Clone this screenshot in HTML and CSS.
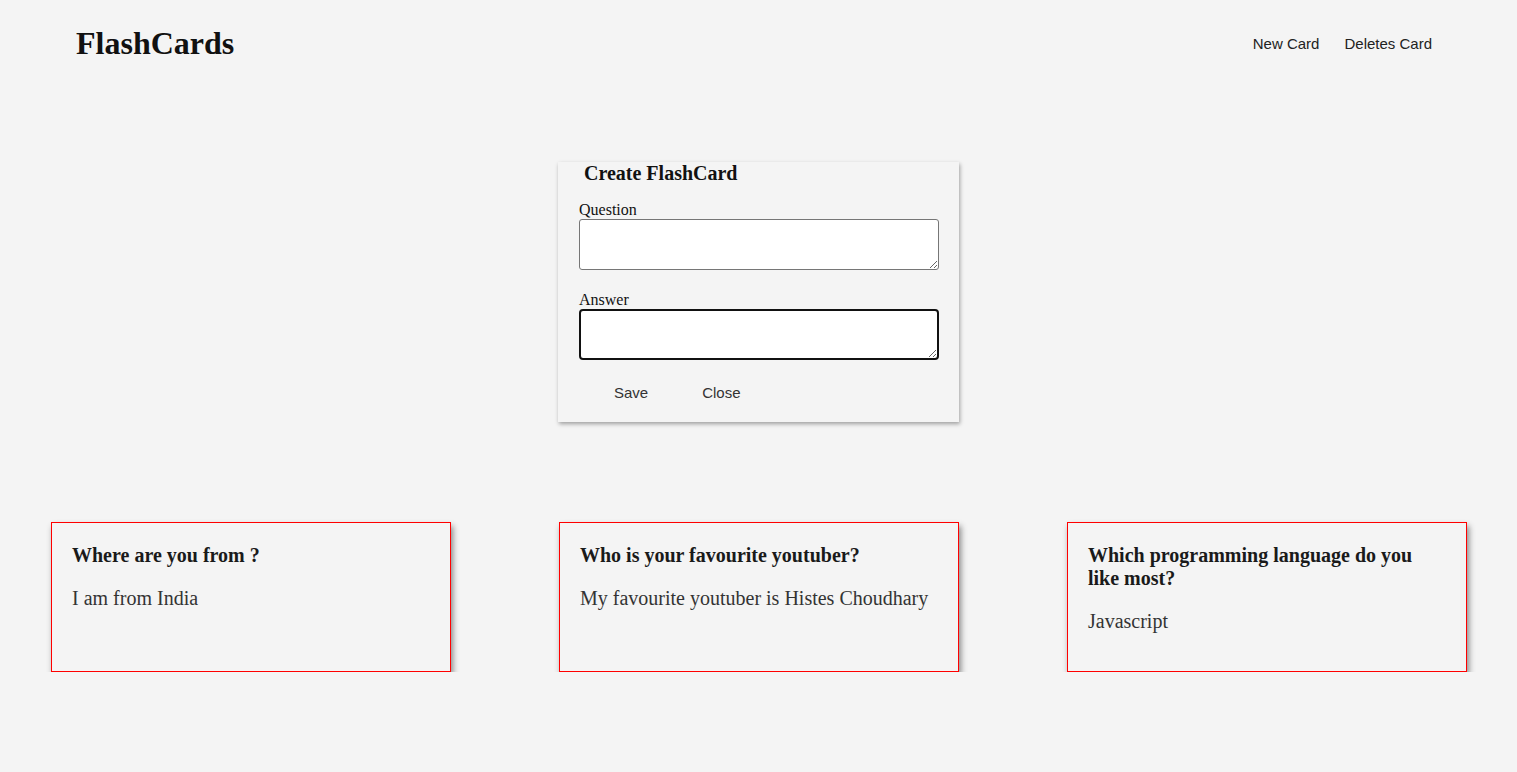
FILE: index.html
```html
<!DOCTYPE html>
<html lang="en">
<head>
<meta charset="utf-8">
<title>FlashCards</title>
<link rel="stylesheet" href="styles.css">
</head>
<body>
<header class="topbar">
  <h1 class="brand">FlashCards</h1>
  <nav class="nav">
    <button class="nav-btn">New Card</button>
    <button class="nav-btn">Deletes Card</button>
  </nav>
</header>

<main>
  <section class="create">
    <h3 class="create-title">Create FlashCard</h3>
    <label class="field-label" for="q">Question</label>
    <textarea id="q" class="field"></textarea>
    <label class="field-label answer-label" for="a">Answer</label>
    <textarea id="a" class="field field-focus"></textarea>
    <div class="actions">
      <button class="act-btn">Save</button>
      <button class="act-btn">Close</button>
    </div>
  </section>

  <section class="cards">
    <article class="card">
      <h3 class="card-q">Where are you from ?</h3>
      <p class="card-a">I am from India</p>
    </article>
    <article class="card">
      <h3 class="card-q">Who is your favourite youtuber?</h3>
      <p class="card-a">My favourite youtuber is Histes Choudhary</p>
    </article>
    <article class="card">
      <h3 class="card-q">Which programming language do you like most?</h3>
      <p class="card-a">Javascript</p>
    </article>
  </section>
</main>
</body>
</html>
```

FILE: styles.css
```css
* { box-sizing: border-box; }

body {
  margin: 0;
  background: #f4f4f4;
  font-family: "Times New Roman", "Liberation Serif", serif;
  color: #111;
}

.topbar {
  height: 87px;
  display: flex;
  align-items: center;
  justify-content: space-between;
  padding: 0 85px 0 76px;
}

.brand {
  margin: 0;
  font-size: 32px;
  font-weight: bold;
  color: #111;
}

.nav {
  display: flex;
  gap: 25px;
}

.nav-btn {
  background: none;
  border: none;
  padding: 0;
  font-family: Arial, "Liberation Sans", sans-serif;
  font-size: 15px;
  color: #222;
  cursor: pointer;
}

.create {
  width: 401px;
  margin: 75px auto 0;
  padding: 0 20px 0 21px;
  height: 260px;
  background: #f4f4f4;
  box-shadow: 1px 2px 4px rgba(0, 0, 0, 0.35);
  display: flex;
  flex-direction: column;
}

.create-title {
  margin: 0;
  padding-left: 5px;
  font-size: 20px;
  line-height: 23px;
  color: #111;
}

.field-label {
  display: block;
  margin-top: 15px;
  font-size: 16px;
  line-height: 19px;
  color: #111;
}

.answer-label {
  margin-top: 20px;
}

.field {
  display: block;
  width: 360px;
  height: 51px;
  border: 1px solid #767676;
  border-radius: 3px;
  background: #fff;
  resize: vertical;
}

.field-focus {
  border: 2px solid #111;
  border-radius: 4px;
}

.actions {
  display: flex;
  gap: 54px;
  padding-left: 35px;
  margin-top: 24px;
}

.act-btn {
  background: none;
  border: none;
  padding: 0;
  font-family: Arial, "Liberation Sans", sans-serif;
  font-size: 15px;
  color: #333;
  cursor: pointer;
}

.cards {
  display: flex;
  justify-content: space-between;
  padding: 0 50px 0 51px;
  margin-top: 100px;
}

.card {
  width: 400px;
  height: 150px;
  border: 1px solid #ff0000;
  padding: 21px 20px 20px;
  box-shadow: 2px 4px 6px rgba(0, 0, 0, 0.45);
  background: #f4f4f4;
}

.card-q {
  margin: 0;
  font-size: 20px;
  line-height: 23px;
  font-weight: bold;
  color: #1a1a1a;
}

.card-a {
  margin: 20px 0 0;
  font-size: 20px;
  line-height: 23px;
  color: #333;
}
```
